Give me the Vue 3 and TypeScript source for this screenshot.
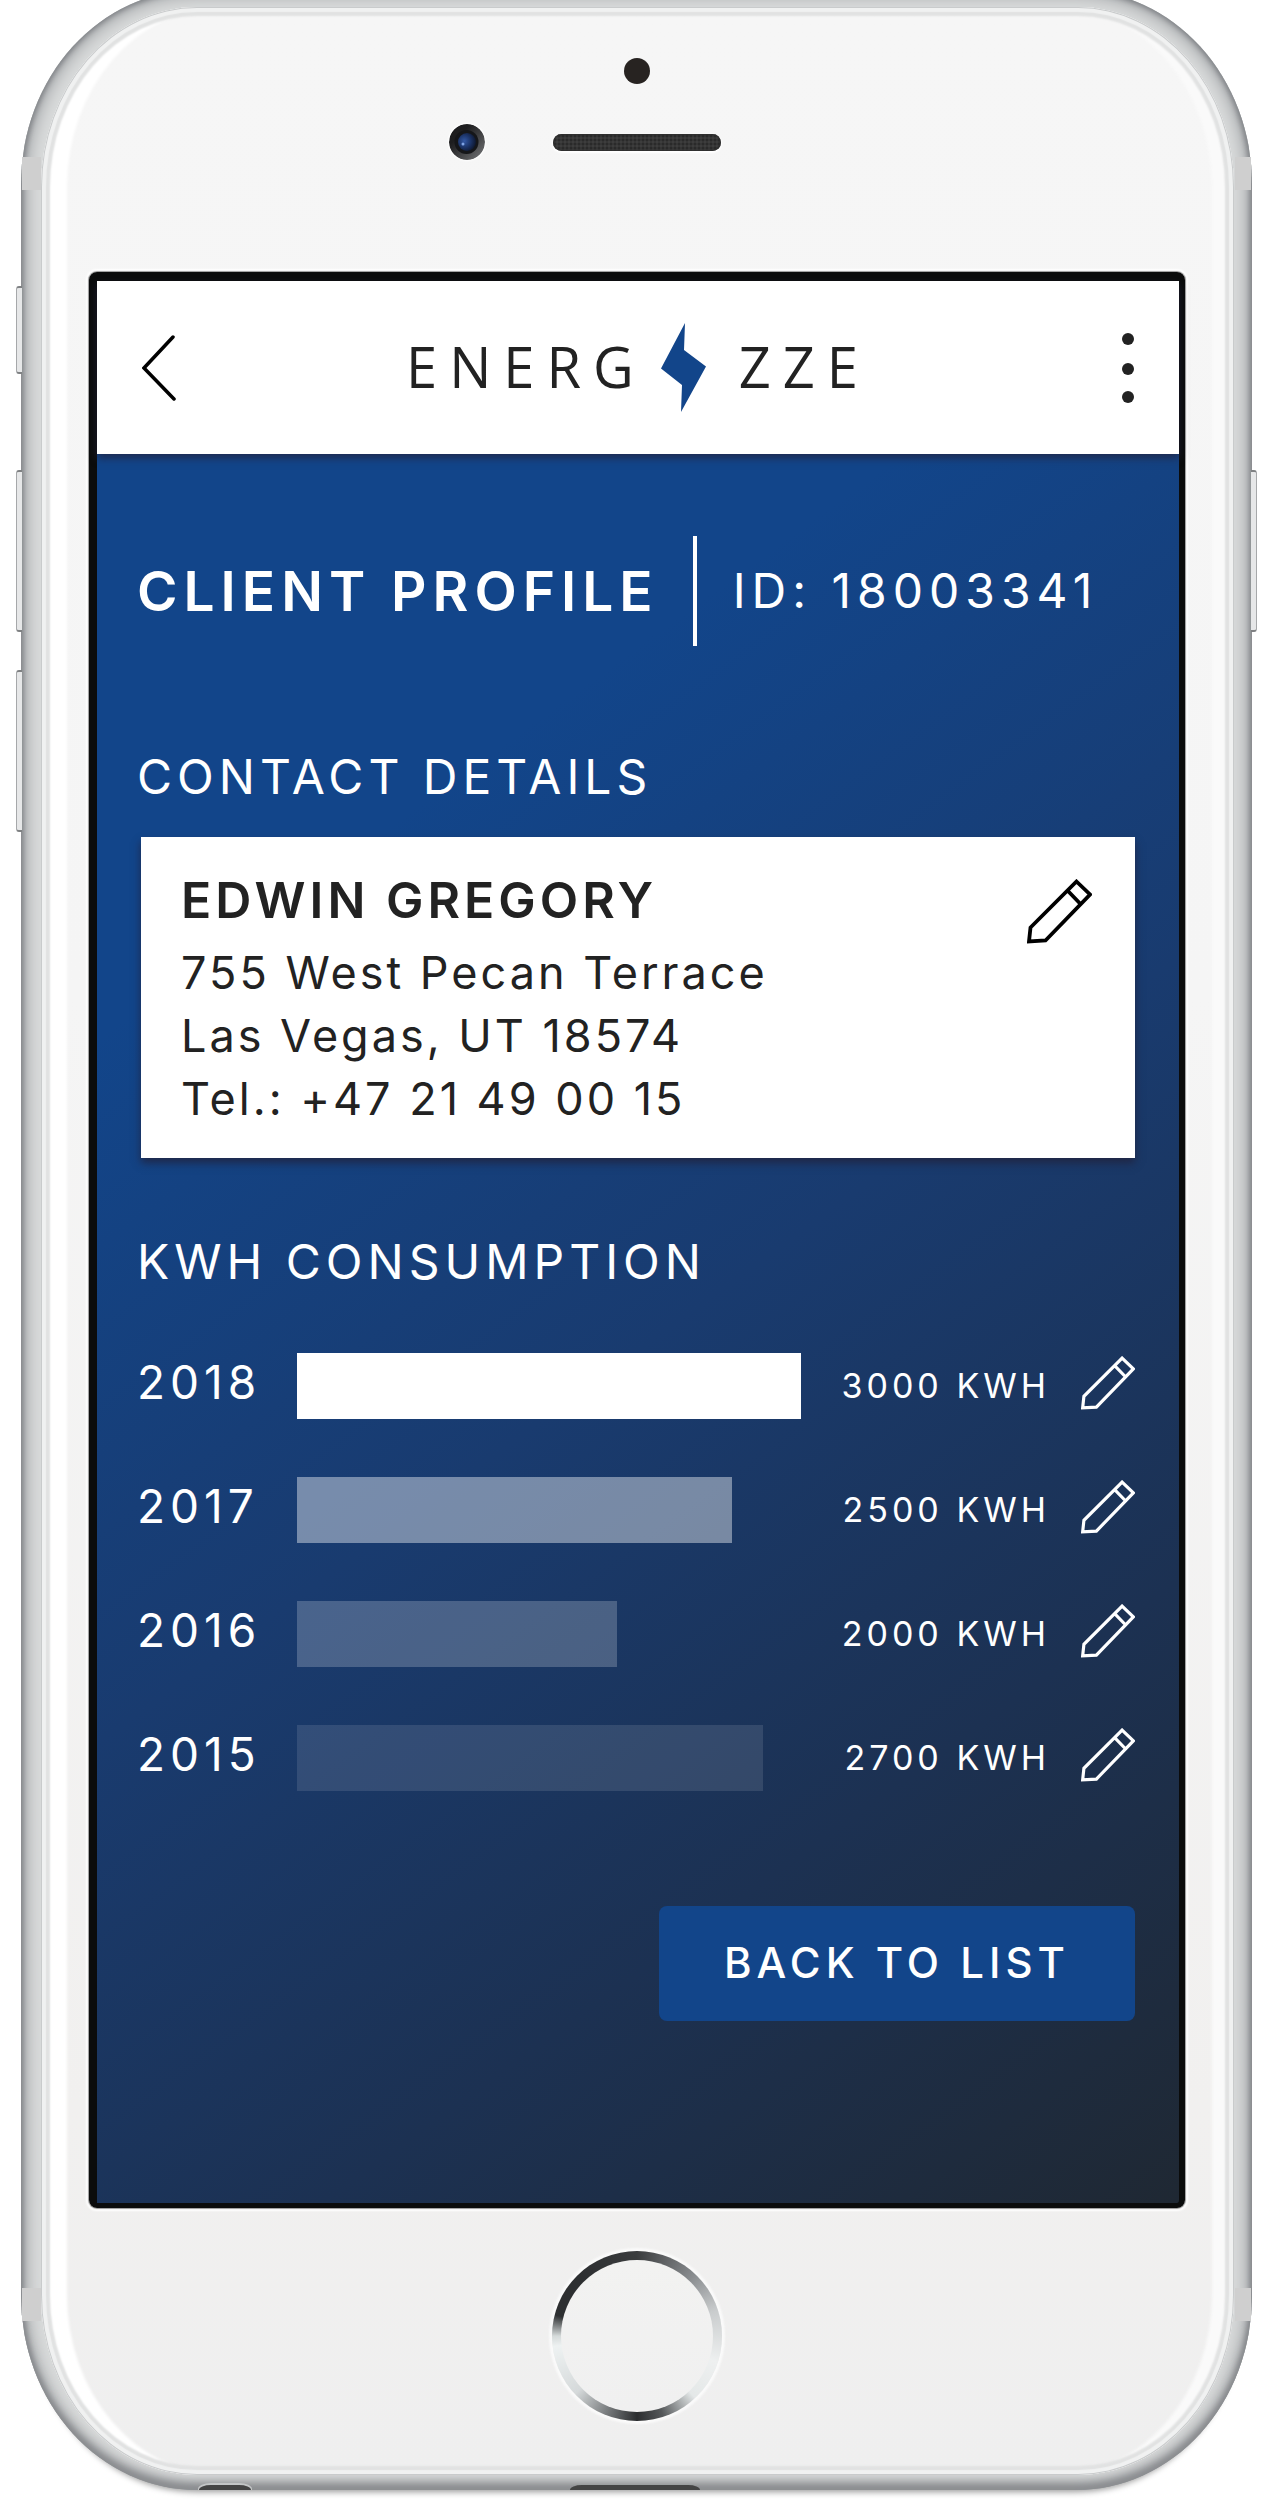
<script setup lang="ts">
interface Reading {
  year: number
  kwh: number
  share: number
  opacity: number
}

const client = {
  id: '18003341',
  name: 'EDWIN GREGORY',
  lines: ['755 West Pecan Terrace', 'Las Vegas, UT 18574', 'Tel.: +47 21 49 00 15'],
}

const readings: Reading[] = [
  { year: 2018, kwh: 3000, share: 100, opacity: 1 },
  { year: 2017, kwh: 2500, share: 86.3, opacity: 0.41 },
  { year: 2016, kwh: 2000, share: 63.5, opacity: 0.21 },
  { year: 2015, kwh: 2700, share: 92.5, opacity: 0.11 },
]

const pencil = 'M49.5 2.5 63 15.5 18.5 61.5 2 62.5 3.5 48.5Z M40.5 11.5 53.5 25'
</script>

<template>
  <div class="page">
    <div class="device">
      <span class="key mute"></span>
      <span class="key volume-up"></span>
      <span class="key volume-down"></span>
      <span class="key power"></span>
      <span class="antenna top-left"></span>
      <span class="antenna top-right"></span>
      <span class="antenna bottom-left"></span>
      <span class="antenna bottom-right"></span>
      <span class="port jack"></span>
      <span class="port charger"></span>

      <div class="glass">
        <div class="sensor"></div>
        <div class="ear">
          <svg class="camera" viewBox="0 0 36 36" aria-hidden="true">
            <defs>
              <linearGradient id="rim" x1="0" y1="0" x2="1" y2="1">
                <stop offset="0.3" stop-color="#1d1d1f" />
                <stop offset="1" stop-color="#77787a" />
              </linearGradient>
              <radialGradient id="lens" cx="0.35" cy="0.45" r="0.7">
                <stop offset="0" stop-color="#3358a4" />
                <stop offset="0.5" stop-color="#1c3468" />
                <stop offset="1" stop-color="#0c1224" />
              </radialGradient>
            </defs>
            <circle cx="18" cy="18" r="18" fill="url(#rim)" />
            <circle cx="17.500" cy="18" r="12" fill="#151619" />
            <circle cx="18" cy="18" r="9" fill="url(#lens)" />
            <circle cx="14" cy="20" r="1.500" fill="#7fa4e6" />
          </svg>
          <div class="speaker"></div>
        </div>

        <main class="screen">
          <header class="bar">
            <button class="icon-button back" type="button" aria-label="Back">
              <svg width="34" height="66" viewBox="0 0 34 66" aria-hidden="true">
                <path d="M31 2 2 33 32 64" fill="none" stroke="#000" stroke-width="3.500" stroke-linecap="round" />
              </svg>
            </button>
            <div class="logo">
              <span>ENERG</span>
              <svg class="bolt" width="45" height="89" viewBox="0 0 45 89" aria-hidden="true">
                <path d="M24 0 23 27 45 43.500 20 89 21 62 0 45.500Z" fill="#12458a" />
              </svg>
              <span>ZZE</span>
            </div>
            <button class="icon-button menu" type="button" aria-label="Menu">
              <svg width="12" height="70" viewBox="0 0 12 70" aria-hidden="true" fill="#222">
                <circle cx="6" cy="6" r="6" />
                <circle cx="6" cy="36" r="6" />
                <circle cx="6" cy="64" r="6" />
              </svg>
            </button>
          </header>

          <div class="content">
            <div class="title">
              <h1>CLIENT PROFILE</h1>
              <span class="client-id">ID: {{ client.id }}</span>
            </div>

            <h2>CONTACT DETAILS</h2>
            <section class="card">
              <div>
                <h3>{{ client.name }}</h3>
                <p v-for="line in client.lines" :key="line">{{ line }}</p>
              </div>
              <button class="icon-button" type="button" aria-label="Edit contact details">
                <svg width="65" height="65" viewBox="0 0 65 65" aria-hidden="true">
                  <path :d="pencil" fill="none" stroke="#000" stroke-width="3.800" />
                </svg>
              </button>
            </section>

            <h2 class="usage-heading">KWH CONSUMPTION</h2>
            <ul class="usage">
              <li v-for="r in readings" :key="r.year">
                <span class="year">{{ r.year }}</span>
                <span class="track">
                  <span class="fill" :style="{ width: r.share + '%', opacity: r.opacity }"></span>
                </span>
                <span class="value">{{ r.kwh }} KWH</span>
                <button class="icon-button edit" type="button" :aria-label="'Edit ' + r.year">
                  <svg width="54" height="54" viewBox="0 0 65 65" aria-hidden="true">
                    <path :d="pencil" fill="none" stroke="#fff" stroke-width="3.800" />
                  </svg>
                </button>
              </li>
            </ul>

            <button class="primary" type="button">BACK TO LIST</button>
          </div>
        </main>

        <button class="home" type="button" aria-label="Home"></button>
      </div>
    </div>
  </div>
</template>

<style>
body {
  margin: 0;
  background: #fff;
}
</style>

<style scoped>
.page {
  display: flow-root;
  overflow: hidden;
  padding: 0 14px 13px 21px;
  font-family: Inter, "Liberation Sans", sans-serif;
}

.device {
  position: relative;
  margin-top: -10px;
  padding: 17px 18px 15px 20px;
  border-radius: 176px / 194px;
  background: #d9dbdb;
  box-shadow:
    inset 0 -9px 8px -2px #8d8f92,
    inset 0 0 5px 2px #7f8286,
    inset 0 0 16px 6px #a3a5a8,
    0 12px 6px -10px rgba(0, 0, 0, 0.4);
}

.glass {
  position: relative;
  padding: 51px 49px 54px 48px;
  border-radius: 156px / 180px;
  background: linear-gradient(#f6f6f6, #f5f5f5 40%, #f1f0ef 85%, #efefef);
  box-shadow:
    inset 0 0 0 1px #c9cbcc,
    inset 0 0 1px 5px #f0f1f1,
    inset 0 0 2px 9px #e1e2e2,
    inset 26px 0 3px 0 #fff,
    inset -22px 0 3px 0 #fafafa;
}

.sensor {
  width: 26px;
  height: 26px;
  margin: 0 auto;
  border-radius: 50%;
  background: #272321;
}

.ear {
  display: grid;
  grid-template-columns: 1fr 168px 1fr;
  align-items: center;
  margin: 40px 0 112px;
}

.camera {
  width: 36px;
  height: 36px;
  margin-right: 68px;
  justify-self: end;
  border-radius: 50%;
  box-shadow: 0 0 2px 1px #fff;
}

.speaker {
  height: 17px;
  border-radius: 9px;
  background: radial-gradient(circle, #2a2a2a 1px, #3d3d3d 2px) 0 0 / 4px 4px;
  box-shadow: inset 0 0 2px 1px #2c2c2c, 0 1px 2px 1px #fff;
}

.screen {
  border: solid #0b0c0c;
  border-width: 9px 6px 5px 8px;
  border-radius: 8px;
  box-shadow: 0 0 1px 1px #999, 0 0 2px 3px #fff;
  background: linear-gradient(144deg, #12458a 28%, #193b6f 54%, #1c3152 77%, #1f2833 100%);
}

.bar {
  display: grid;
  grid-template-columns: 1fr auto 1fr;
  align-items: center;
  height: 173px;
  padding: 0 45px;
  background: #fff;
  box-shadow: 0 4px 8px rgba(34, 34, 60, 0.75);
}

.icon-button {
  display: block;
  padding: 0;
  border: 0;
  background: none;
  cursor: pointer;
}

.icon-button svg {
  display: block;
}

.menu {
  justify-self: end;
}

.logo {
  display: flex;
  align-items: center;
  font-family: "Open Sans", "Noto Sans", sans-serif;
  font-size: 56px;
  font-weight: 400;
  line-height: 76px;
  letter-spacing: 12px;
  color: #222;
}

.logo span {
  padding-bottom: 4px;
}

.bolt {
  margin: 0 33px 0 15px;
}

.content {
  padding: 82px 44px 182px 40px;
  color: #fff;
}

.title {
  display: flex;
  align-items: center;
  height: 110px;
  margin-bottom: 101px;
}

h1,
h2,
h3,
p {
  margin: 0;
}

h1 {
  font-size: 55px;
  font-weight: 600;
  line-height: 60px;
  letter-spacing: 6px;
  white-space: nowrap;
}

.client-id {
  margin-left: 34px;
  padding-left: 36px;
  border-left: 4px solid #fff;
  font-size: 48px;
  line-height: 110px;
  letter-spacing: 6px;
  white-space: nowrap;
}

h2 {
  font-size: 48px;
  font-weight: 400;
  line-height: 60px;
  letter-spacing: 5px;
}

.card {
  display: flex;
  justify-content: space-between;
  align-items: flex-start;
  margin: 30px 0 74px 4px;
  padding: 33px 43px 28px 40px;
  background: #fff;
  color: #222;
  box-shadow: 0 5px 8px rgba(34, 34, 60, 0.8);
}

.card .icon-button {
  margin-top: 9px;
}

h3 {
  margin-bottom: 11px;
  font-size: 50px;
  font-weight: 600;
  line-height: 60px;
  letter-spacing: 4px;
}

.card p {
  font-size: 45px;
  line-height: 63px;
  letter-spacing: 3px;
}

.usage {
  display: grid;
  gap: 58px;
  margin: 61px 0 115px;
  padding: 0;
  list-style: none;
}

.usage li {
  display: grid;
  grid-template-columns: 160px 1fr 249px 85px;
  height: 66px;
}

.year {
  font-size: 46px;
  line-height: 58px;
  letter-spacing: 5px;
}

.track,
.fill {
  display: block;
  height: 66px;
}

.fill {
  background: #fff;
}

.value {
  font-size: 34px;
  line-height: 66px;
  letter-spacing: 4px;
  text-align: right;
  white-space: nowrap;
}

.edit {
  justify-self: end;
  align-self: start;
  margin-top: 3px;
}

.primary {
  display: block;
  min-width: 476px;
  height: 115px;
  margin-left: auto;
  padding: 0 40px 2px;
  border: 0;
  border-radius: 8px;
  background: #12458a;
  color: #fff;
  font-family: inherit;
  font-size: 42px;
  font-weight: 500;
  letter-spacing: 5px;
  cursor: pointer;
}

.home {
  display: block;
  width: 170px;
  height: 170px;
  margin: 43px auto 0;
  padding: 0;
  border: 9px solid transparent;
  border-radius: 50%;
  background:
    linear-gradient(#f2f2f1, #f0f0f0) padding-box,
    conic-gradient(#3a3c3e, #8a8d90 12%, #c9cccd 20%, #eef0f0 30%, #e4e8e8 38%, #55585a 45%, #2b2d2f 50%, #6b6e70 55%, #d5d9da 63%, #eef2f2 73%, #d5dada 75%, #2d2f31 79%, #2d2f31 88%, #3a3c3e) border-box;
  box-shadow: 0 0 2px 3px #fafafa;
}

.key {
  position: absolute;
  left: -5px;
  width: 6px;
  box-sizing: border-box;
  border: 1px solid #a6a8aa;
  border-top: 2px solid #7f8183;
  border-bottom: 2px solid #7f8183;
  border-right: 0;
  border-radius: 3px 0 0 3px;
  background: #e6e7e8;
}

.mute {
  top: 296px;
  height: 88px;
}

.volume-up {
  top: 480px;
  height: 162px;
}

.volume-down {
  top: 680px;
  height: 162px;
}

.power {
  top: 480px;
  right: -5px;
  left: auto;
  height: 162px;
  border-right: 1px solid #a6a8aa;
  border-left: 0;
  border-radius: 0 3px 3px 0;
}

.antenna {
  position: absolute;
  width: 19px;
  height: 33px;
  background: #cfcfcf;
}

.top-left {
  top: 167px;
  left: 1px;
}

.top-right {
  top: 167px;
  right: 1px;
  width: 16px;
}

.bottom-left {
  bottom: 169px;
  left: 1px;
}

.bottom-right {
  right: 1px;
  bottom: 169px;
  width: 16px;
}

.port {
  position: absolute;
  bottom: 0;
  height: 5px;
  border-radius: 12px 12px 0 0 / 5px 5px 0 0;
  background: #444;
}

.jack {
  left: 178px;
  width: 52px;
  box-shadow: 0 -1px 0 1px #c3c5c6;
}

.charger {
  left: 50%;
  width: 130px;
  margin-left: -67px;
}
</style>
